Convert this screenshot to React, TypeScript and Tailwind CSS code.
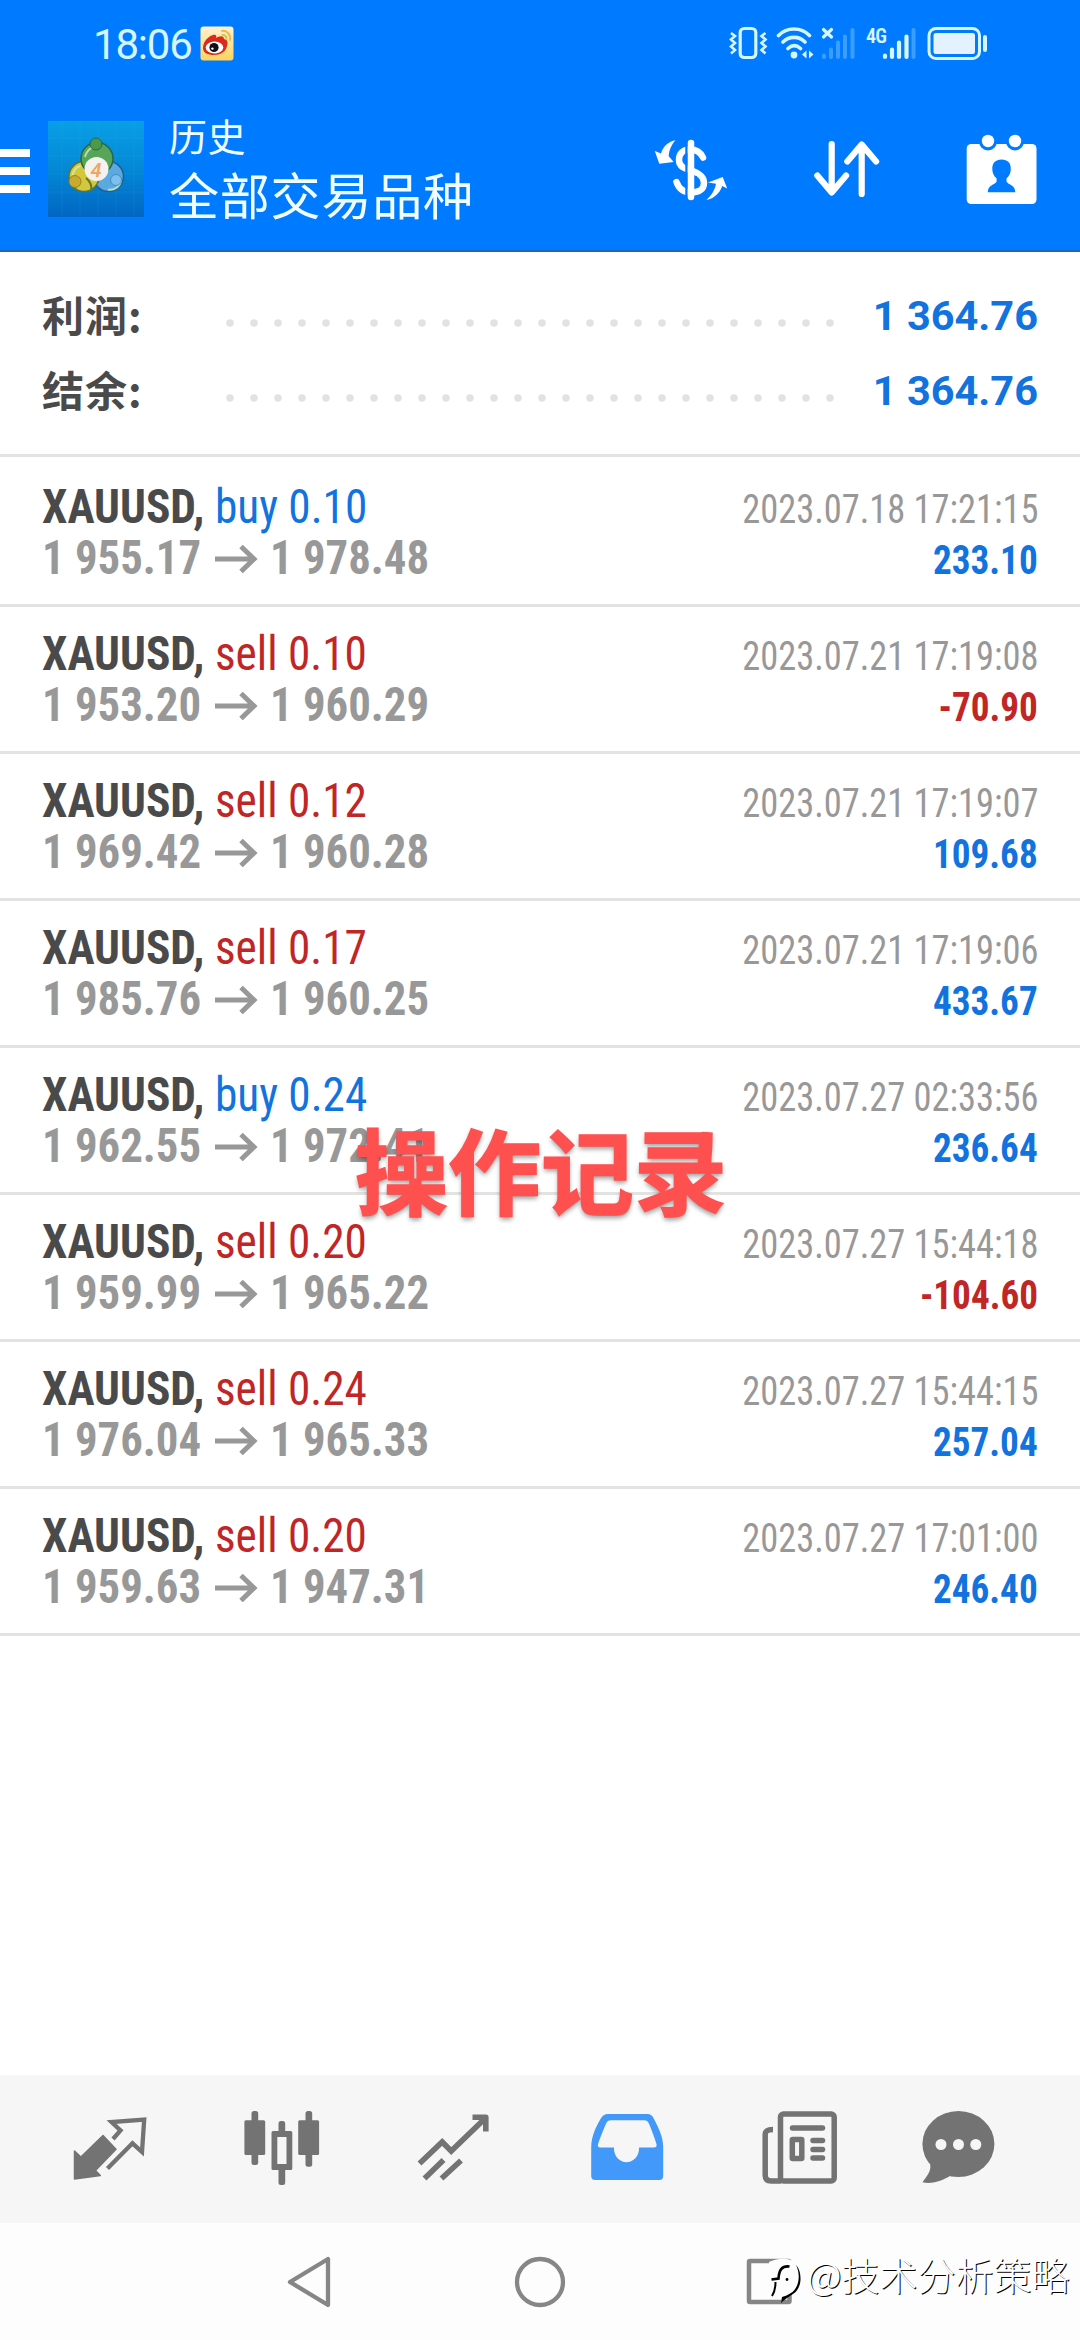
import type { ReactNode } from "react";
import clsx from "clsx";

type Deal = {
  side: "buy" | "sell";
  volume: string;
  open: string;
  close: string;
  time: string;
  profit: string;
};

const deals: Deal[] = [
  { side: "buy", volume: "0.10", open: "1 955.17", close: "1 978.48", time: "2023.07.18 17:21:15", profit: "233.10" },
  { side: "sell", volume: "0.10", open: "1 953.20", close: "1 960.29", time: "2023.07.21 17:19:08", profit: "-70.90" },
  { side: "sell", volume: "0.12", open: "1 969.42", close: "1 960.28", time: "2023.07.21 17:19:07", profit: "109.68" },
  { side: "sell", volume: "0.17", open: "1 985.76", close: "1 960.25", time: "2023.07.21 17:19:06", profit: "433.67" },
  { side: "buy", volume: "0.24", open: "1 962.55", close: "1 972.41", time: "2023.07.27 02:33:56", profit: "236.64" },
  { side: "sell", volume: "0.20", open: "1 959.99", close: "1 965.22", time: "2023.07.27 15:44:18", profit: "-104.60" },
  { side: "sell", volume: "0.24", open: "1 976.04", close: "1 965.33", time: "2023.07.27 15:44:15", profit: "257.04" },
  { side: "sell", volume: "0.20", open: "1 959.63", close: "1 947.31", time: "2023.07.27 17:01:00", profit: "246.40" },
];

const summary = [
  { label: "利润:", value: "1 364.76" },
  { label: "结余:", value: "1 364.76" },
];

function WeiboIcon() {
  return (
    <svg width="34" height="35" viewBox="0 0 34 35">
      <defs>
        <linearGradient id="weibo-bg" x1="0" y1="0" x2="0" y2="1">
          <stop offset="0" stopColor="#fff3d0" />
          <stop offset="1" stopColor="#fcd35c" />
        </linearGradient>
      </defs>
      <rect x="0.5" y="0.5" width="33" height="34" rx="3" fill="url(#weibo-bg)" />
      <path d="M3 22C3 15 9 10 13 9c3-1 4 1 3 3 3-2 8-3 8 1 4 1 4 4 3 7-1 6-7 9-13 9S3 27 3 22Z" fill="#d92a1c" />
      <ellipse cx="14.5" cy="21.5" rx="8.8" ry="6" fill="#fff" />
      <circle cx="14" cy="21.5" r="4.6" fill="#111" />
      <circle cx="12.4" cy="22.6" r="1.2" fill="#fff" />
      <path d="M22 5c5-1 9 4 8 9M22.5 9c3 0 4 2 4 4" fill="none" stroke="#e2bd55" strokeWidth="2" strokeLinecap="round" />
    </svg>
  );
}

function StatusBar() {
  return (
    <div className="flex h-[86px] items-center pl-[93px] pr-[92px] text-[#d3f6ff]">
      <span className="w-[107px] pt-1 whitespace-nowrap font-[Roboto] text-[42px] leading-none tracking-[-1.2px]">18:06</span>
      <WeiboIcon />
      <div className="ml-auto flex items-center">
        {/* vibrate */}
        <svg width="39" height="34" viewBox="0 0 39 34" fill="none" stroke="currentColor">
          <rect x="11.2" y="2.5" width="15.6" height="29" rx="4" strokeWidth="3.2" />
          <path d="M2 7l4 3-4 3.5 4 3.5-4 3.5 4 3.5-4 3.5M36.5 7l-4 3 4 3.5-4 3.5 4 3.5-4 3.5 4 3.5" strokeWidth="2.6" />
        </svg>
        {/* wifi */}
        <svg className="ml-2" width="38" height="34" viewBox="0 0 38 34" fill="none" stroke="currentColor" strokeLinecap="round">
          <path d="M2.5 9.5C11 .8 25 .8 33.5 9.5M7 16c6-6.2 16-6.2 22 0M12 22.5c4-3.6 8.5-3.6 12.5 0" strokeWidth="3.6" />
          <circle cx="18" cy="29" r="3.4" fill="currentColor" stroke="none" />
          <path d="M30.5 24.5v8l-4.5-4zM33 24.5v8l4.5-4z" fill="currentColor" stroke="none" />
        </svg>
        {/* sim 1, no service */}
        <svg className="ml-[7px]" width="34" height="34" viewBox="0 0 34 34" stroke="currentColor" strokeLinecap="round">
          <path d="M2.5 3.5l8 7.5M10.5 3.5l-8 7.5" strokeWidth="3.2" />
          <g strokeWidth="4" opacity="0.28">
            <path d="M3 29.5V31M10 23.5V31M17 16.5V31M24 10.5V31M31.5 4V31" />
          </g>
        </svg>
        {/* sim 2 */}
        <div className="relative ml-[11px]">
          <span className="absolute top-0 left-0 font-[Roboto] text-[20px] leading-[20px] font-semibold font-stretch-condensed tracking-[-0.8px]">4G</span>
          <svg width="50" height="34" viewBox="0 0 50 34" stroke="currentColor" strokeLinecap="round">
            <path d="M19 29.5V31M26 23.5V31M33 16.5V31M40.5 10.5V31" strokeWidth="4.2" />
            <path d="M47.5 4V31" strokeWidth="4" opacity="0.28" />
          </svg>
        </div>
        {/* battery */}
        <svg className="ml-[11px]" width="61" height="34" viewBox="0 0 61 34">
          <rect x="2" y="2.5" width="50.5" height="30" rx="7" fill="none" stroke="currentColor" strokeWidth="3" />
          <rect x="6.5" y="7" width="41.5" height="21" rx="2.5" fill="#e4f1ff" />
          <rect x="56" y="9" width="4" height="17" rx="2" fill="currentColor" />
        </svg>
      </div>
    </div>
  );
}

function AppLogo() {
  return (
    <svg width="96" height="96" viewBox="0 0 96 96">
      <defs>
        <linearGradient id="logo-bg" x1="0" y1="0" x2="0" y2="1">
          <stop offset="0" stopColor="#089fe6" />
          <stop offset="0.5" stopColor="#0488d6" />
          <stop offset="1" stopColor="#0166c2" />
        </linearGradient>
      </defs>
      <rect width="96" height="96" fill="url(#logo-bg)" />
      <path d="M0 17h96M0 35h96M0 53h96M0 71h96M14 0v96M32 0v96M50 0v96M68 0v96M86 0v96" stroke="#4cc3f5" strokeWidth="0.7" opacity="0.15" />
      <circle cx="60.5" cy="55.5" r="15" fill="#5aa9e0" stroke="#1f5f94" strokeWidth="1.5" />
      <circle cx="36" cy="55.5" r="15" fill="#d3c73c" stroke="#5f7530" strokeWidth="1.5" />
      <path d="M38 57c5 4 6 9 5 13" stroke="#5f7530" strokeWidth="2" fill="none" />
      <circle cx="49" cy="37.5" r="16" fill="#56a558" stroke="#2a6648" strokeWidth="1.5" />
      <path d="M37 36c2-8 8-11 13-10M24.5 54c1-5 4-8 8-9M60 68.5c7 1 12-3 13-9" fill="none" stroke="#d4efc0" strokeWidth="2" opacity="0.75" />
      <circle cx="48" cy="23" r="6" fill="#4b9a4c" stroke="#2a6648" strokeWidth="1" />
      <circle cx="27" cy="60.5" r="6" fill="#c9a92e" stroke="#8a7a20" strokeWidth="0.8" />
      <circle cx="68" cy="59" r="5.5" fill="#7cc1ee" stroke="#3a80b8" strokeWidth="0.8" />
      <circle cx="48.5" cy="48" r="12" fill="#f5f1ee" />
      <text x="48" y="55.5" textAnchor="middle" fontFamily="Roboto, sans-serif" fontSize="20" fontStyle="italic" fontWeight="600" fill="#f0a562">
        4
      </text>
    </svg>
  );
}

function CurrencyIcon() {
  return (
    <svg width="74" height="66" viewBox="0 0 74 66" fill="white">
      <path
        d="M49 21.5C46 15 41.5 13.5 36 13.5c-8 0-11 5-11 10.5 0 7 6 8.5 12 10.5 8 2.5 13 6 13 12.5 0 7-6 9.5-13 9.5-7 0-12-3.5-14.5-10.5"
        fill="none"
        stroke="white"
        strokeWidth="6.5"
        strokeLinecap="round"
      />
      <path d="M32.5 3v61" stroke="#007bff" strokeWidth="2.5" />
      <path d="M37 7v54" stroke="white" strokeWidth="6.5" strokeLinecap="round" />
      <path d="M42 27.5v4M42 40v12" stroke="#007bff" strokeWidth="2" />
      <path d="M21.5 4.3C15 5.5 9 10 7 17.5L.8 15l4.5 12.8L19.7 26l-5-5.8c.3-6 3-12 6.8-15.9Z" />
      <path d="M52.5 64c4.5-4 8.5-10 9.5-16.2l-8-1.3L68.7 41l4.5 11.6-5-2.6C66 57 60 62.5 52.5 64Z" />
    </svg>
  );
}

function SortIcon() {
  return (
    <svg width="68" height="58" viewBox="0 0 68 58" fill="none" stroke="white" strokeWidth="6.2" strokeLinecap="round" strokeLinejoin="round">
      <path d="M17.7 4v48M3.3 35.5l14.4 17 14.4-17" />
      <path d="M47.7 54V5M33.3 21.5l14.4-17 14.4 17" />
    </svg>
  );
}

function CalendarIcon() {
  return (
    <svg width="71" height="71" viewBox="0 0 71 71">
      <rect x="0.7" y="10" width="69.8" height="60" rx="4.5" fill="white" />
      <circle cx="22" cy="7.5" r="9" fill="#007bff" />
      <circle cx="49" cy="7.5" r="9" fill="#007bff" />
      <circle cx="22" cy="7" r="6.2" fill="white" />
      <circle cx="49" cy="7" r="6.2" fill="white" />
      <path
        d="M35.600 25.500c6 0 9.400 3.500 9.200 9.500 0 4-1.500 7-4.300 9.500v3c2 3.500 8.800 3.500 8.800 10.800H21.800c0-7.300 6.800-7.300 8.800-10.800v-3c-2.800-2.500-4.300-5.500-4.300-9.500-.2-6 3.300-9.500 9.300-9.500Z"
        fill="#007bff"
      />
    </svg>
  );
}

function AppBar() {
  return (
    <div className="flex h-[166px] items-center pr-[43px]">
      <div className="flex w-[30px] shrink-0 flex-col gap-[10px] pt-1">
        <span className="h-2 bg-white" />
        <span className="h-2 bg-white" />
        <span className="h-2 bg-white" />
      </div>
      <div className="ml-[18px]">
        <AppLogo />
      </div>
      <div className="ml-[25px] flex flex-col pt-[12px] text-[#f0fdff]">
        <span className="text-[38px] leading-[46px] tracking-[0.5px]">历史</span>
        <span className="text-[50px] leading-[74px] tracking-[0.8px]">全部交易品种</span>
      </div>
      <div className="ml-auto flex items-center">
        <CurrencyIcon />
        <div className="ml-[86px]">
          <SortIcon />
        </div>
        <div className="ml-[84px]">
          <CalendarIcon />
        </div>
      </div>
    </div>
  );
}

function DottedLine() {
  return (
    <svg className="mt-3" width="608" height="8" viewBox="0 0 608 8">
      <path d="M4 4H605" stroke="#e2e2e2" strokeWidth="7.5" strokeLinecap="round" strokeDasharray="0 24" />
    </svg>
  );
}

function Summary() {
  return (
    <section className="flex h-[205px] flex-col border-b-[3px] border-[#e3e3e3] px-[42px] pt-[27px]">
      {summary.map((item) => (
        <div key={item.label} className="flex h-[75px] items-center">
          <span className="w-[184px] pb-[5px] font-['Noto_Sans_CJK_SC',sans-serif] text-[42px] leading-none font-bold tracking-[1px] text-[#4a4a4a]">{item.label}</span>
          <DottedLine />
          <span className="ml-auto font-[Roboto] text-[41.5px] font-bold text-[#1273df]">{item.value}</span>
        </div>
      ))}
    </section>
  );
}

function DealRow({ deal }: { deal: Deal }) {
  const negative = deal.profit.startsWith("-");
  return (
    <li className="flex h-[147px] justify-between border-b-[3px] border-[#e3e3e3] px-[42px] pt-[21px] font-[Roboto] font-stretch-condensed">
      <div className="flex flex-col whitespace-nowrap">
        <div className="flex text-[48px] leading-[51px]">
          <span className="w-[173px] origin-left scale-x-[0.945] font-bold text-[#4a4a4a]">XAUUSD,</span>
          <span className={clsx("origin-left scale-x-[0.942]", deal.side === "buy" ? "text-[#1273df]" : "text-[#c02626]")}>
            {deal.side} {deal.volume}
          </span>
        </div>
        <div className="flex items-center text-[48px] leading-[51px] font-bold text-[#989898]">
          <span className="w-[172px] origin-left scale-x-[0.933]">{deal.open}</span>
          <svg width="44" height="30" viewBox="0 0 44 30" fill="none" stroke="currentColor" strokeWidth="5">
            <path d="M1 16h38M27 3.5 40 16 27 28.500" />
          </svg>
          <span className="ml-[12px] origin-left scale-x-[0.933]">{deal.close}</span>
        </div>
      </div>
      <div className="flex flex-col items-end pt-[3px] text-[40px] leading-[51px]">
        <span className="origin-right scale-x-[0.91] text-[#989898]">{deal.time}</span>
        <span className={clsx("origin-right scale-x-[0.93] font-bold", negative ? "text-[#c02626]" : "text-[#1273df]")}>{deal.profit}</span>
      </div>
    </li>
  );
}

function TabIcon({ children }: { children: ReactNode }) {
  return (
    <button className="flex items-center justify-center">
      <svg width="80" height="80" viewBox="0 0 80 80" fill="none">
        {children}
      </svg>
    </button>
  );
}

function TabBar() {
  return (
    <nav className="grid h-[148px] grid-cols-[repeat(5,172.5px)_144px] bg-[#f6f6f6] pl-6 text-[#737373]">
      {/* quotes */}
      <TabIcon>
        <path d="M4.5 42l6.4 6L33 26.5 46 40.3 25.5 61.5l4.8 5L4.5 70Z" fill="currentColor" stroke="currentColor" strokeWidth="1.5" strokeLinejoin="round" />
        <path d="M43 30l7.5-8.5L41.5 13l32.7-2.5L72 43l-9.5-8.7L37.5 59.5" stroke="currentColor" strokeWidth="4.3" />
      </TabIcon>
      {/* charts */}
      <TabIcon>
        <g fill="currentColor">
          <rect x="1.4" y="11.3" width="20.8" height="34.7" rx="1.5" />
          <rect x="8.5" y="2" width="6.7" height="54" rx="2.5" />
          <path fillRule="evenodd" d="M30 22h17.8q1.5 0 1.5 1.5v36q0 1.5-1.5 1.5H30q-1.5 0-1.5-1.5v-36q0-1.5 1.5-1.5Zm4.3 6v27h9.2V28Z" />
          <rect x="35.5" y="12" width="6.7" height="13" rx="2.5" />
          <rect x="35.5" y="58" width="6.7" height="18" rx="2.5" />
          <rect x="55.2" y="11.3" width="20.9" height="34.7" rx="1.5" />
          <rect x="62.5" y="2" width="6.7" height="55.7" rx="2.5" />
        </g>
      </TabIcon>
      {/* trade */}
      <TabIcon>
        <g stroke="currentColor" strokeWidth="5.6">
          <path d="M4.5 54.5 27.2 33l9 9L70 9.5" />
          <path d="M57.5 8.3h13.3v14.2" strokeLinejoin="round" />
          <path d="M9.5 69.5 28.5 51M26.5 69.5 46 51.5" />
        </g>
      </TabIcon>
      {/* history */}
      <TabIcon>
        <path
          fillRule="evenodd"
          d="M20 5h39.5c3 0 5 1.5 6.5 5 4 8 9.2 17 9.2 28v29q0 4-4 4H7.2q-4 0-4-4V38C3.2 27 8.5 17 12.5 10 14.5 6.5 16.5 5 20 5Zm3 6.3c-2.5 0-4 1-5 3.5-3 7-6 14-8 20.5-.5 2 .3 3.300 2.500 3.300h13.400c0 19.500 25.200 19.500 25.200 0h14.700c2.200 0 3.200-1.300 2.700-3.300-2-6.500-4.500-13.500-7.500-20.500-1-2.500-2.500-3.500-5-3.500Z"
          fill="#4299fa"
        />
      </TabIcon>
      {/* news */}
      <TabIcon>
        <g stroke="currentColor" strokeWidth="5.5">
          <rect x="20.5" y="5" width="53.7" height="67" rx="3" />
          <path d="M13 20.5c-5 0-7.8 1-7.8 5V66c0 4 2 6 6 6h10" />
          <path d="M32.5 19h30M53 31.5h9.5M53 40.5h9.5M53 49h9.5" strokeLinecap="round" />
          <rect x="32.3" y="30.5" width="9.5" height="19" rx="0.5" />
        </g>
      </TabIcon>
      {/* messages */}
      <TabIcon>
        <ellipse cx="39.4" cy="35" rx="36" ry="33" fill="currentColor" />
        <path d="M11 55c2 7-4 13-7.5 18.3 9 2.2 19-1.3 27.5-6.3Z" fill="currentColor" />
        <circle cx="22" cy="35.5" r="5.5" fill="#f6f6f6" />
        <circle cx="39.5" cy="35.5" r="5.5" fill="#f6f6f6" />
        <circle cx="56.8" cy="35.5" r="5.5" fill="#f6f6f6" />
      </TabIcon>
    </nav>
  );
}

function SystemNav() {
  return (
    <div className="relative grid h-[117px] grid-cols-3 items-center justify-items-center bg-[#fdfdfd] px-[195px]">
      <svg width="52" height="52" viewBox="0 0 52 52" fill="none" stroke="#868686" strokeWidth="4.3" strokeLinejoin="round">
        <path d="M44 3v46L6 26Z" />
      </svg>
      <svg width="52" height="52" viewBox="0 0 52 52" fill="none" stroke="#868686" strokeWidth="4.3">
        <circle cx="26" cy="26" r="23" />
      </svg>
      <svg width="52" height="52" viewBox="0 0 52 52" fill="none" stroke="#868686" strokeWidth="4.5" strokeLinejoin="round">
        <rect x="5" y="5" width="40.5" height="41" rx="1" />
      </svg>

      {/* Watermark */}
      <div className="absolute top-[34px] left-[766px] flex items-start">
        <svg width="38" height="48" viewBox="0 0 38 48">
          <path d="M3 5C10 1 24 0 30 6c7 7 6 24-6 31l-8 8-1-5L2 42Z" fill="#fdfdfd" />
          <path d="M30 8c6 6 7 23-3 29-4 2.5-6 4-12 9l1-6c3-1 6-2 9-4 8-5 10-18 5-28Z" fill="#000" />
          <path d="M23.5 9.5c-8-1-10.5 4-11 12l-7 1" fill="none" stroke="#000" strokeWidth="2.6" />
          <path d="M9.5 25c0 6-1.5 11-3.5 14" fill="none" stroke="#000" strokeWidth="2" />
          <circle cx="21" cy="22.5" r="1.4" fill="#000" />
        </svg>
        <span className="mt-[-2px] ml-[3px] font-['Noto_Sans_CJK_SC',sans-serif] text-[38px] leading-none font-light whitespace-nowrap text-white [text-shadow:1px_1px_0_#000]">@技术分析策略</span>
      </div>
    </div>
  );
}

export default function App() {
  return (
    <div className="flex h-[2340px] w-[1080px] flex-col overflow-hidden bg-white font-[Roboto,'Noto_Sans_CJK_SC',sans-serif]">
      <header className="h-[252px] border-b-2 border-[#2066b8] bg-[#007bff]">
        <StatusBar />
        <AppBar />
      </header>

      <main className="relative flex-1">
        <Summary />
        <ul className="pt-[3px]">
          {deals.map((deal) => (
            <DealRow key={deal.time} deal={deal} />
          ))}
        </ul>
        <div className="absolute top-[878px] left-[355px] text-[93px] leading-none font-bold whitespace-nowrap text-[#ff5050] [-webkit-text-stroke:1.5px_#ff5050] [text-shadow:0_3px_5px_rgba(0,0,0,0.4)]">
          操作记录
        </div>
      </main>

      <TabBar />
      <SystemNav />
    </div>
  );
}
